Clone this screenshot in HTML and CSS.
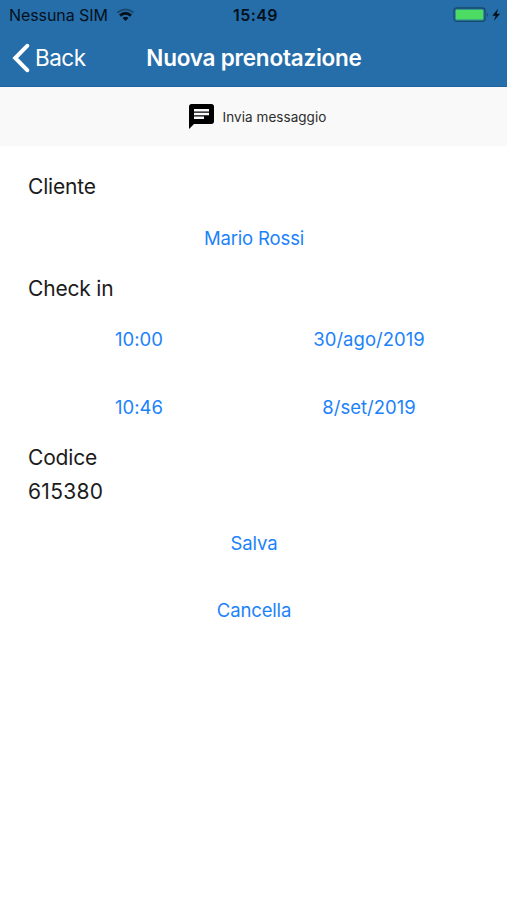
FILE: index.html
```html
<!DOCTYPE html>
<html lang="it">
<head>
<meta charset="utf-8">
<title>Nuova prenotazione</title>
<link rel="stylesheet" href="styles.css">
</head>
<body>
<header class="header">
  <div class="status">
    <div class="carrier"><span class="carrier-name">Nessuna SIM</span>
      <svg class="wifi" width="19" height="14" viewBox="0 0 19 14" fill="none">
        <path d="M1.4 4.6Q9.5-1.6 17.6 4.6" stroke="#1b4a70" stroke-width="2"/>
        <path d="M4 7.6Q9.5 2.8 15 7.6" stroke="#03111d" stroke-width="2.8"/>
        <path d="M9.5 13L6.5 10Q9.5 7.4 12.5 10Z" fill="#03111d"/>
      </svg>
    </div>
    <span class="clock">15:49</span>
    <svg class="battery" width="50" height="16" viewBox="0 0 50 16">
      <rect x="1" y="1" width="31" height="13.4" rx="2.6" fill="#2d839b" stroke="#17496d" stroke-width="1.3"/>
      <rect x="2.8" y="2.8" width="27.4" height="9.8" rx="1" fill="#4cdc64"/>
      <path d="M33.8 5.2Q36 7.7 33.8 10.2Z" fill="#17496d"/>
      <path d="M45 1.8L39.3 8.8H42.7L40.9 13.8L47.2 6.7H43.7Z" fill="#03111d"/>
    </svg>
  </div>
  <nav class="nav">
    <a class="back"><svg width="18" height="30" viewBox="0 0 18 30" fill="none" stroke="#fff" stroke-width="4" stroke-linecap="round"><path d="M15.2 2.8L3.2 15L15.2 27.2"/></svg><span class="back-text">Back</span></a>
    <h1 class="title">Nuova prenotazione</h1>
    <span></span>
  </nav>
</header>
<div class="message-bar">
  <svg width="25" height="25" viewBox="2 2 20 20"><path d="M20 2H4c-1.1 0-1.99.9-1.99 2L2 22l4-4h14c1.1 0 2-.9 2-2V4c0-1.1-.9-2-2-2z"/><path d="M6 6h12v2H6zM6 9h12v2H6zM6 12h8v2H6z" fill="#f9f9f9"/></svg>
  <span class="message-text">Invia messaggio</span>
</div>
<main class="form">
  <div class="label">Cliente</div>
  <div class="row"><a>Mario Rossi</a></div>
  <div class="label">Check in</div>
  <div class="row pair"><a>10:00</a><a>30/ago/2019</a></div>
  <div class="row pair"><a>10:46</a><a>8/set/2019</a></div>
  <div class="label">Codice</div>
  <div class="label code">615380</div>
  <div class="row"><a>Salva</a></div>
  <div class="row"><a>Cancella</a></div>
</main>
</body>
</html>
```
FILE: styles.css
```css
* { box-sizing: border-box; }
body {
  margin: 0;
  min-height: 900px;
  background: #fff;
  color: #1c1c1c;
  font-family: Inter, "Liberation Sans", sans-serif;
}
svg { display: block; flex: none; }
.header { height: 87px; background: #266eaa; border-bottom: 1px solid #1f66a0; }
.status {
  display: grid;
  grid-template-columns: 1fr auto 1fr;
  align-items: center;
  height: 29px;
  padding: 1px 4px 0 9px;
  color: #03111d;
  font-size: 16px;
}
.carrier { display: flex; align-items: center; gap: 8px; }
.carrier-name { letter-spacing: -.08px; }
.clock { font-weight: 600; letter-spacing: .4px; margin-right: 1px; }
.battery { justify-self: end; }
.nav {
  display: grid;
  grid-template-columns: 1fr auto 1fr;
  align-items: center;
  height: 57px;
  padding: 0 12px;
  color: #fff;
}
.back { display: flex; align-items: center; gap: 5px; font-size: 22.5px; letter-spacing: -.5px; }
.title { margin: 0; padding-left: 1px; font-size: 22.5px; font-weight: 600; letter-spacing: -.22px; }
.message-bar {
  display: flex;
  align-items: center;
  justify-content: center;
  gap: 9px;
  height: 59px;
  background: #f9f9f9;
  color: #2c2c2c;
  font-size: 13.5px;
  letter-spacing: .05px;
  padding-left: 8px;
}
.form { padding: 23.5px 28px 0; }
.label { display: flex; align-items: center; height: 34px; font-size: 21px; letter-spacing: -.18px; }
.code { letter-spacing: .3px; }
.row {
  display: flex;
  align-items: center;
  justify-content: center;
  height: 67.5px;
  padding: 1.6px 0 0 1px;
  color: #1c82fb;
  font-size: 18.5px;
  letter-spacing: -.15px;
}
.pair {
  display: grid;
  grid-template-columns: 222px 222px;
  column-gap: 8px;
  justify-content: start;
  justify-items: center;
  padding: 1px 0 0;
  letter-spacing: .02px;
}
```
